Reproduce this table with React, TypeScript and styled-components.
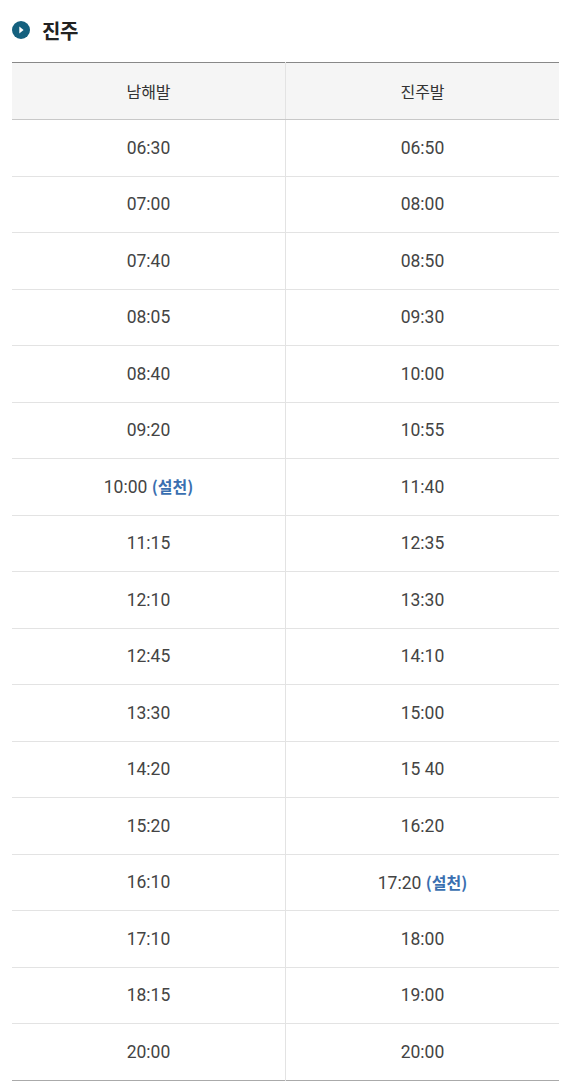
import React from 'react';
import styled, { createGlobalStyle } from 'styled-components';

const GlobalStyle = createGlobalStyle`
  html, body {
    margin: 0;
    padding: 0;
    background: #fff;
  }
  body {
    font-family: Roboto, "Noto Sans CJK KR", sans-serif;
    color: #333;
  }
`;

const Wrapper = styled.section`
  padding: 0 9px 0 12px;
`;

const Title = styled.h3`
  display: flex;
  align-items: center;
  gap: 12px;
  height: 30px;
  margin: 15px 0 17px;
  font-family: "Noto Sans CJK KR", sans-serif;
  font-size: 20px;
  font-weight: 700;
  color: #222;
  letter-spacing: -0.5px;

  svg {
    flex: none;
  }
`;

const Table = styled.table`
  width: 100%;
  border-collapse: collapse;
  table-layout: fixed;
  border-top: 1px solid #888;
  border-bottom: 1px solid #aaa;
`;

const HeadCell = styled.th`
  height: 56px;
  padding: 0;
  background: #f5f5f5;
  border-bottom: 1px solid #c8c8c8;
  font-family: "Noto Sans CJK KR", sans-serif;
  font-size: 16px;
  line-height: 20px;
  font-weight: 400;
  color: #333;
  text-align: center;
  vertical-align: middle;

  & + & {
    border-left: 1px solid #e3e3e3;
  }
`;

const Row = styled.tr`
  & + & td {
    border-top: 1px solid #e3e3e3;
  }
`;

const Cell = styled.td`
  height: 55.5px;
  padding: 0;
  font-size: 17.5px;
  line-height: 22px;
  font-weight: 400;
  color: #444;
  text-align: center;

  & + & {
    border-left: 1px solid #e3e3e3;
  }
`;

const Note = styled.span`
  font-family: "Noto Sans CJK KR", sans-serif;
  font-size: 16px;
  font-weight: 700;
  color: #3a6fb0;
`;

type Time = { t: string; note?: string };

const rows: [Time, Time][] = [
  [{ t: '06:30' }, { t: '06:50' }],
  [{ t: '07:00' }, { t: '08:00' }],
  [{ t: '07:40' }, { t: '08:50' }],
  [{ t: '08:05' }, { t: '09:30' }],
  [{ t: '08:40' }, { t: '10:00' }],
  [{ t: '09:20' }, { t: '10:55' }],
  [{ t: '10:00', note: '(설천)' }, { t: '11:40' }],
  [{ t: '11:15' }, { t: '12:35' }],
  [{ t: '12:10' }, { t: '13:30' }],
  [{ t: '12:45' }, { t: '14:10' }],
  [{ t: '13:30' }, { t: '15:00' }],
  [{ t: '14:20' }, { t: '15 40' }],
  [{ t: '15:20' }, { t: '16:20' }],
  [{ t: '16:10' }, { t: '17:20', note: '(설천)' }],
  [{ t: '17:10' }, { t: '18:00' }],
  [{ t: '18:15' }, { t: '19:00' }],
  [{ t: '20:00' }, { t: '20:00' }],
];

const TimeText = ({ t, note }: Time) => (
  <>
    {t}
    {note && <> <Note>{note}</Note></>}
  </>
);

const App: React.FC = () => {
  return (
    <>
      <GlobalStyle />
      <Wrapper>
        <Title>
          <svg width="18" height="18" viewBox="0 0 18 18">
            <circle cx="9" cy="9" r="9" fill="#14607e" />
            <path d="M7.3 5.6 L11.6 9 L7.3 12.4 Z" fill="#fff" />
          </svg>
          진주
        </Title>
        <Table>
          <thead>
            <tr>
              <HeadCell>남해발</HeadCell>
              <HeadCell>진주발</HeadCell>
            </tr>
          </thead>
          <tbody>
            {rows.map(([a, b], i) => (
              <Row key={i}>
                <Cell><TimeText {...a} /></Cell>
                <Cell><TimeText {...b} /></Cell>
              </Row>
            ))}
          </tbody>
        </Table>
      </Wrapper>
    </>
  );
};

export default App;
